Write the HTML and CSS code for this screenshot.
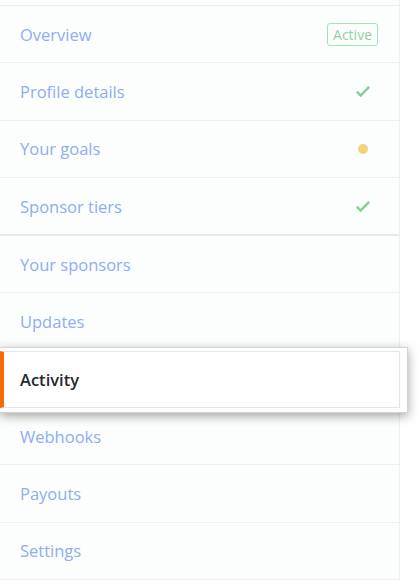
FILE: index.html
```html
<!DOCTYPE html>
<html lang="en">
<head>
<meta charset="utf-8">
<title>Sponsors dashboard nav</title>
<link rel="stylesheet" href="styles.css">
</head>
<body>
<nav class="menu">
  <div class="menu-head"></div>
  <a class="menu-item">
    <span class="label">Overview</span>
    <span class="badge">Active</span>
  </a>
  <a class="menu-item">
    <span class="label">Profile details</span>
    <span class="status"><svg class="check" viewBox="0 0 12 16" width="14" height="18.7"><path d="M12 5l-8 8-4-4 1.5-1.5L4 10l6.5-6.5L12 5z"/></svg></span>
  </a>
  <a class="menu-item">
    <span class="label">Your goals</span>
    <span class="status"><span class="dot"></span></span>
  </a>
  <a class="menu-item menu-item-sep">
    <span class="label">Sponsor tiers</span>
    <span class="status"><svg class="check" viewBox="0 0 12 16" width="14" height="18.7"><path d="M12 5l-8 8-4-4 1.5-1.5L4 10l6.5-6.5L12 5z"/></svg></span>
  </a>
  <a class="menu-item"><span class="label">Your sponsors</span></a>
  <a class="menu-item"><span class="label">Updates</span></a>
  <a class="menu-item menu-item-lifted">
    <span class="ghost">
      <span class="ghost-inner">Activity</span>
    </span>
  </a>
  <a class="menu-item"><span class="label">Webhooks</span></a>
  <a class="menu-item"><span class="label">Payouts</span></a>
  <a class="menu-item"><span class="label">Settings</span></a>
</nav>
</body>
</html>
```
FILE: styles.css
```css
html, body {
  margin: 0;
  padding: 0;
  background: #ffffff;
}
body {
  width: 418px;
  height: 586px;
  overflow: hidden;
  font-family: "Open Sans", "Noto Sans", sans-serif;
}
.menu {
  width: 399px;
  border-right: 1px solid #eeefef;
  background: #fcfdfd;
}
.menu-head {
  height: 5px;
  border-bottom: 1px solid #ececec;
}
.menu-item {
  display: flex;
  align-items: center;
  justify-content: space-between;
  box-sizing: border-box;
  height: 57.3px;
  padding: 0 21px 0 20px;
  border-bottom: 1px solid #efefef;
  font-size: 16.5px;
  color: #8daef0;
  text-decoration: none;
}
.menu-item-sep {
  height: 58.3px;
  border-bottom: 2px solid #e8e8e8;
}
.badge {
  font-size: 14px;
  line-height: 21px;
  padding: 0 5px;
  border: 1px solid #9ee8ae;
  border-radius: 3px;
  color: #93d0a2;
}
.status {
  width: 30px;
  display: flex;
  justify-content: center;
  align-items: center;
}
.check {
  fill: #84d09a;
  display: block;
}
.dot {
  width: 10px;
  height: 10px;
  border-radius: 50%;
  background: #f0d37c;
}
.menu-item-lifted {
  position: relative;
  background: #ffffff;
}
.ghost {
  position: absolute;
  left: 0;
  top: -4px;
  width: 408px;
  box-sizing: border-box;
  padding: 3px 7px 4px 0;
  background: #ffffff;
  border: 1px solid #d3d3d3;
  border-left: none;
  box-shadow: 0 3px 10px rgba(0, 0, 0, 0.36);
}
.ghost-inner {
  display: flex;
  align-items: center;
  height: 57px;
  box-sizing: border-box;
  border-top: 1px solid #e1e4e8;
  border-bottom: 1px solid #e1e4e8;
  border-right: 1px solid #e1e4e8;
  border-left: 4px solid #f66a0a;
  padding-left: 16px;
  font-size: 16.5px;
  font-weight: 600;
  color: #24292e;
}
```
